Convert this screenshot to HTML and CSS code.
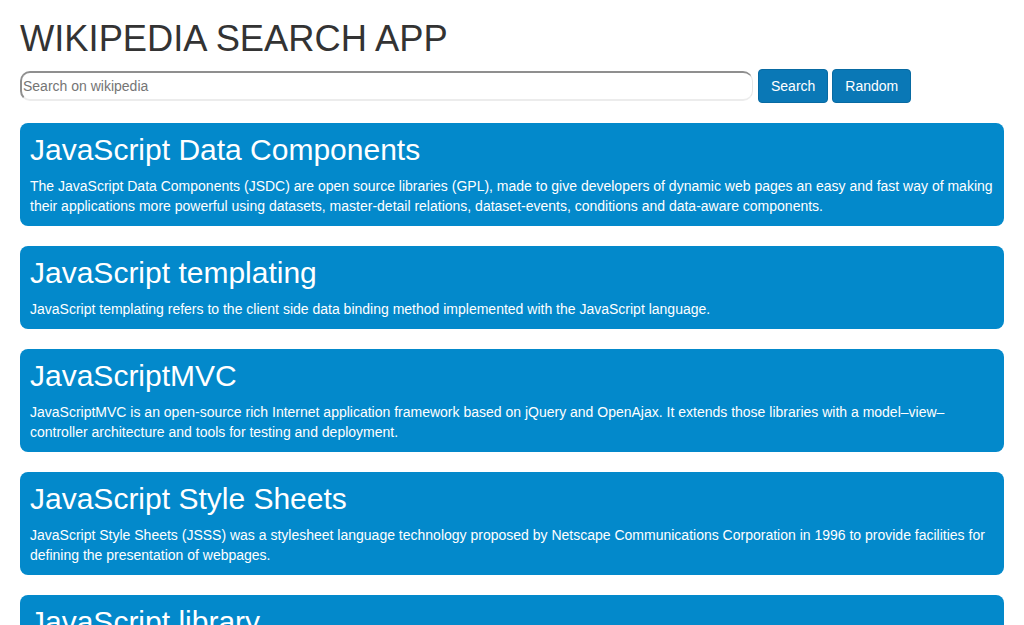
FILE: index.html
```html
<!DOCTYPE html>
<html>
<head>
<meta charset="utf-8">
<title>Wikipedia Search App</title>
<link rel="stylesheet" href="styles.css">
</head>
<body>
<div class="container">
  <h1 class="title">WIKIPEDIA SEARCH APP</h1>
  <form class="search-row">
    <input class="search-input" type="text" placeholder="Search on wikipedia">
    <button class="btn" type="button">Search</button>
    <button class="btn" type="button">Random</button>
  </form>
  <div class="results">
    <div class="card">
      <h2 class="card-title">JavaScript Data Components</h2>
      <p class="card-text">The JavaScript Data Components (JSDC) are open source libraries (GPL), made to give developers of dynamic web pages an easy and fast way of making their applications more powerful using datasets, master-detail relations, dataset-events, conditions and data-aware components.</p>
    </div>
    <div class="card">
      <h2 class="card-title">JavaScript templating</h2>
      <p class="card-text">JavaScript templating refers to the client side data binding method implemented with the JavaScript language.</p>
    </div>
    <div class="card">
      <h2 class="card-title">JavaScriptMVC</h2>
      <p class="card-text">JavaScriptMVC is an open-source rich Internet application framework based on jQuery and OpenAjax. It extends those libraries with a model–view–controller architecture and tools for testing and deployment.</p>
    </div>
    <div class="card">
      <h2 class="card-title">JavaScript Style Sheets</h2>
      <p class="card-text">JavaScript Style Sheets (JSSS) was a stylesheet language technology proposed by Netscape Communications Corporation in 1996 to provide facilities for defining the presentation of webpages.</p>
    </div>
    <div class="card">
      <h2 class="card-title">JavaScript library</h2>
      <p class="card-text">A JavaScript library is a library of pre-written JavaScript which allows for easier development of JavaScript-based applications, especially for AJAX and other web-centric technologies.</p>
    </div>
  </div>
</div>
</body>
</html>
```
FILE: styles.css
```css
html, body {
  margin: 0;
  padding: 0;
  background: #fff;
}
body {
  font-family: "Liberation Sans", Arial, sans-serif;
  font-size: 14px;
  line-height: 20px;
  color: #333;
}
.container {
  padding: 0 20px;
}
.title {
  margin: 19px 0 10px;
  font-size: 36.3px;
  line-height: 39.6px;
  font-weight: 400;
  color: #333;
}
.search-row {
  display: flex;
  align-items: center;
  margin: 0;
}
.search-input {
  box-sizing: border-box;
  width: 733px;
  height: 30px;
  margin: 0 5px 0 0;
  padding: 1px 1px;
  font-family: "Liberation Sans", Arial, sans-serif;
  font-size: 14px;
  color: #333;
  border-style: solid;
  border-width: 2px 1px 2px 2px;
  border-color: #8f8f8f #e6e6e6 #ececec #8f8f8f;
  border-radius: 10px;
  outline: none;
}
.search-input::placeholder {
  color: #757575;
}
.btn {
  box-sizing: border-box;
  height: 34px;
  padding: 6px 12px;
  margin-right: 4px;
  font-family: "Liberation Sans", Arial, sans-serif;
  font-size: 14px;
  line-height: 20px;
  color: #fff;
  background: #0a78b6;
  border: 1px solid #086aa2;
  border-radius: 4px;
  cursor: pointer;
}
.results {
  margin-top: 20px;
  display: flex;
  flex-direction: column;
  gap: 20px;
}
.card {
  background: #0389cb;
  color: #fff;
  border-radius: 8px;
  padding: 0 10px;
  overflow: hidden;
}
.card-title {
  margin: 10px 0 10px;
  font-size: 30px;
  line-height: 33px;
  font-weight: 400;
}
.card-text {
  margin: 0 0 10px;
  font-size: 14px;
  line-height: 20px;
}
```
